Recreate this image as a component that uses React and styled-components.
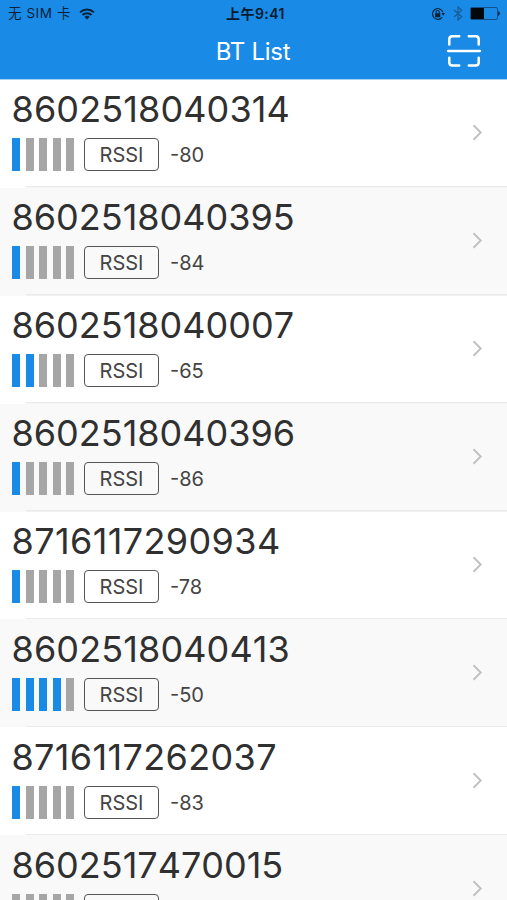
import React from 'react';
import styled, { createGlobalStyle } from 'styled-components';

const GlobalStyle = createGlobalStyle`
  * {
    box-sizing: border-box;
  }

  body {
    margin: 0;
    background: #ffffff;
    font-family: Inter, 'Noto Sans CJK SC', sans-serif;
    overflow: hidden;
  }
`;

const Screen = styled.div`
  width: 507px;
  height: 900px;
  overflow: hidden;
  background: #ffffff;
`;

const Header = styled.header`
  height: 80px;
  background: #198ae5;
  border-bottom: 1px solid #a5d3f6;
`;

const StatusBar = styled.div`
  height: 27px;
  padding: 0 7px 0 8px;
  display: grid;
  grid-template-columns: 1fr auto 1fr;
  align-items: center;
  color: #08223a;
  font-size: 13.5px;
  line-height: 27px;
`;

const Carrier = styled.div`
  display: flex;
  align-items: center;
  gap: 8px;
  white-space: pre;
  letter-spacing: 0.55px;
`;

const Time = styled.div`
  margin-right: -3px;
  color: #061a2d;
  font-size: 14px;
  font-weight: 600;
  letter-spacing: 0.45px;
`;

const StatusIcons = styled.div`
  display: flex;
  justify-content: flex-end;
  align-items: center;
`;

const NavBar = styled.div`
  height: 48px;
  padding-right: 26px;
  display: grid;
  grid-template-columns: 1fr auto 1fr;
  align-items: center;
`;

const Title = styled.h1`
  grid-column: 2;
  margin: 1px -25px 0 0;
  color: #ffffff;
  font-size: 24px;
  font-weight: 400;
  letter-spacing: -0.25px;
  line-height: 48px;
`;

const ScanButton = styled.button`
  justify-self: end;
  display: flex;
  margin-bottom: 2px;
  padding: 0;
  border: 0;
  background: none;
`;

const List = styled.ul`
  margin: 0;
  padding: 0;
  list-style: none;
`;

const Row = styled.li`
  height: 107.9px;
  padding: 9.4px 24px 0 12px;
  display: flex;
  justify-content: space-between;
  background: ${({ $shaded }) => ($shaded ? '#f9f9f9' : '#ffffff')};
  background-image: linear-gradient(#ebebeb, #ebebeb);
  background-size: calc(100% - 26px) 1.5px;
  background-position: right bottom;
  background-repeat: no-repeat;
`;

const DeviceId = styled.div`
  height: 41px;
  margin-left: -0.5px;
  color: #303030;
  font-size: 36px;
  font-kerning: none;
  line-height: 41px;
  letter-spacing: ${({ $spacing }) => $spacing}px;
`;

const Signal = styled.div`
  margin-top: 8px;
  height: 33px;
  display: flex;
  align-items: center;
`;

const Bars = styled.div`
  display: flex;
  gap: 5.5px;
  margin-right: 10px;
`;

const Bar = styled.span`
  width: 8px;
  height: 33px;
  background: ${({ $active }) => ($active ? '#198ae5' : '#a6a6a6')};
`;

const RssiLabel = styled.span`
  width: 75px;
  height: 33px;
  padding-top: 1px;
  border: 1.5px solid #555555;
  border-radius: 4px;
  color: #444444;
  font-size: 20px;
  line-height: 31px;
  text-align: center;
`;

const RssiValue = styled.span`
  margin: 2px 0 0 11px;
  color: #444444;
  font-size: 20px;
  line-height: 33px;
`;

const Arrow = styled.svg`
  margin-top: 35px;
  flex: none;
`;

const WifiIcon = () => (
  <svg width="16" height="12" viewBox="0 0 16 12" fill="none" stroke="#08223a" strokeWidth="1.9">
    <path d="M1 4.4C5 0.6 11 0.6 15 4.4" />
    <path d="M3.5 7C6 4.6 10 4.6 12.5 7" />
    <path d="M8 11.5L5.4 8.9C6.9 7.5 9.1 7.5 10.6 8.9Z" fill="#08223a" stroke="none" />
  </svg>
);

const LockIcon = () => (
  <svg width="14" height="14" viewBox="0 0 14 14" fill="none" stroke="#08223a">
    <path d="M11.1 10.4A5.4 5.4 0 1 1 12 5.2" strokeWidth="1.1" />
    <path d="M10.4 6.1H14L12.3 8.7Z" fill="#08223a" stroke="none" />
    <rect x="4.1" y="6.2" width="5.2" height="4" rx="0.5" fill="#08223a" stroke="none" />
    <path d="M5.1 6.5V5.1A1.6 1.6 0 0 1 8.3 5.1V6.5" strokeWidth="1.1" />
  </svg>
);

const BluetoothIcon = styled.svg`
  margin-left: 8px;
`;

const BatteryIcon = styled.svg`
  margin-left: 7px;
`;

const ScanIcon = () => (
  <svg width="34" height="34" viewBox="0 0 34 34" fill="none" stroke="#ffffff" strokeWidth="2.5" strokeLinecap="round">
    <path d="M2.3 10.5V5.2Q2.3 2.2 5.3 2.2H12.2" />
    <path d="M21.8 2.2H28.7Q31.7 2.2 31.7 5.2V10.5" />
    <path d="M2.3 23.8V28.5Q2.3 31.5 5.3 31.5H12.2" />
    <path d="M21.8 31.5H28.7Q31.7 31.5 31.7 28.5V23.8" />
    <path d="M1.2 17H32.8" />
  </svg>
);

const devices = [
  { id: '8602518040314', rssi: -80, level: 1, spacing: 0.12 },
  { id: '8602518040395', rssi: -84, level: 1, spacing: 0 },
  { id: '8602518040007', rssi: -65, level: 2, spacing: 0 },
  { id: '8602518040396', rssi: -86, level: 1, spacing: 0 },
  { id: '8716117290934', rssi: -78, level: 1, spacing: 0.38 },
  { id: '8602518040413', rssi: -50, level: 4, spacing: 0.12 },
  { id: '8716117262037', rssi: -83, level: 1, spacing: 0.35 },
  { id: '8602517470015', level: 0, spacing: 0 }
];

const DeviceRow = ({ device, shaded }) => (
  <Row $shaded={shaded}>
    <div>
      <DeviceId $spacing={device.spacing}>{device.id}</DeviceId>
      <Signal>
        <Bars>
          {[0, 1, 2, 3, 4].map((bar) => (
            <Bar key={bar} $active={bar < device.level} />
          ))}
        </Bars>
        <RssiLabel>{device.rssi !== undefined && 'RSSI'}</RssiLabel>
        {device.rssi !== undefined && <RssiValue>{device.rssi}</RssiValue>}
      </Signal>
    </div>
    <Arrow width="11" height="17" viewBox="0 0 11 17" fill="none" stroke="#c2c2c2" strokeWidth="2">
      <path d="M1.5 1.3L8.7 8.5L1.5 15.7" />
    </Arrow>
  </Row>
);

const App = () => (
  <Screen>
    <GlobalStyle />
    <Header>
      <StatusBar>
        <Carrier>
          无 SIM 卡
          <WifiIcon />
        </Carrier>
        <Time>上午9:41</Time>
        <StatusIcons>
          <LockIcon />
          <BluetoothIcon width="10" height="15" viewBox="0 0 10 15" fill="none" stroke="#165c98" strokeWidth="1.2">
            <path d="M1 4L8.7 10.7L5 14V1L8.7 4.3L1 11" />
          </BluetoothIcon>
          <BatteryIcon width="30" height="13" viewBox="0 0 30 13">
            <rect x="0.5" y="0.5" width="27" height="12" rx="1.5" fill="none" stroke="#125087" />
            <rect x="1" y="1" width="13" height="11" fill="#02070c" />
            <path d="M28.2 4.3C30.3 4.8 30.3 8.2 28.2 8.7Z" fill="#061a2d" />
          </BatteryIcon>
        </StatusIcons>
      </StatusBar>
      <NavBar>
        <Title>BT List</Title>
        <ScanButton aria-label="Scan">
          <ScanIcon />
        </ScanButton>
      </NavBar>
    </Header>
    <List>
      {devices.map((device, index) => (
        <DeviceRow key={device.id} device={device} shaded={index % 2 === 1} />
      ))}
    </List>
  </Screen>
);

export default App;
